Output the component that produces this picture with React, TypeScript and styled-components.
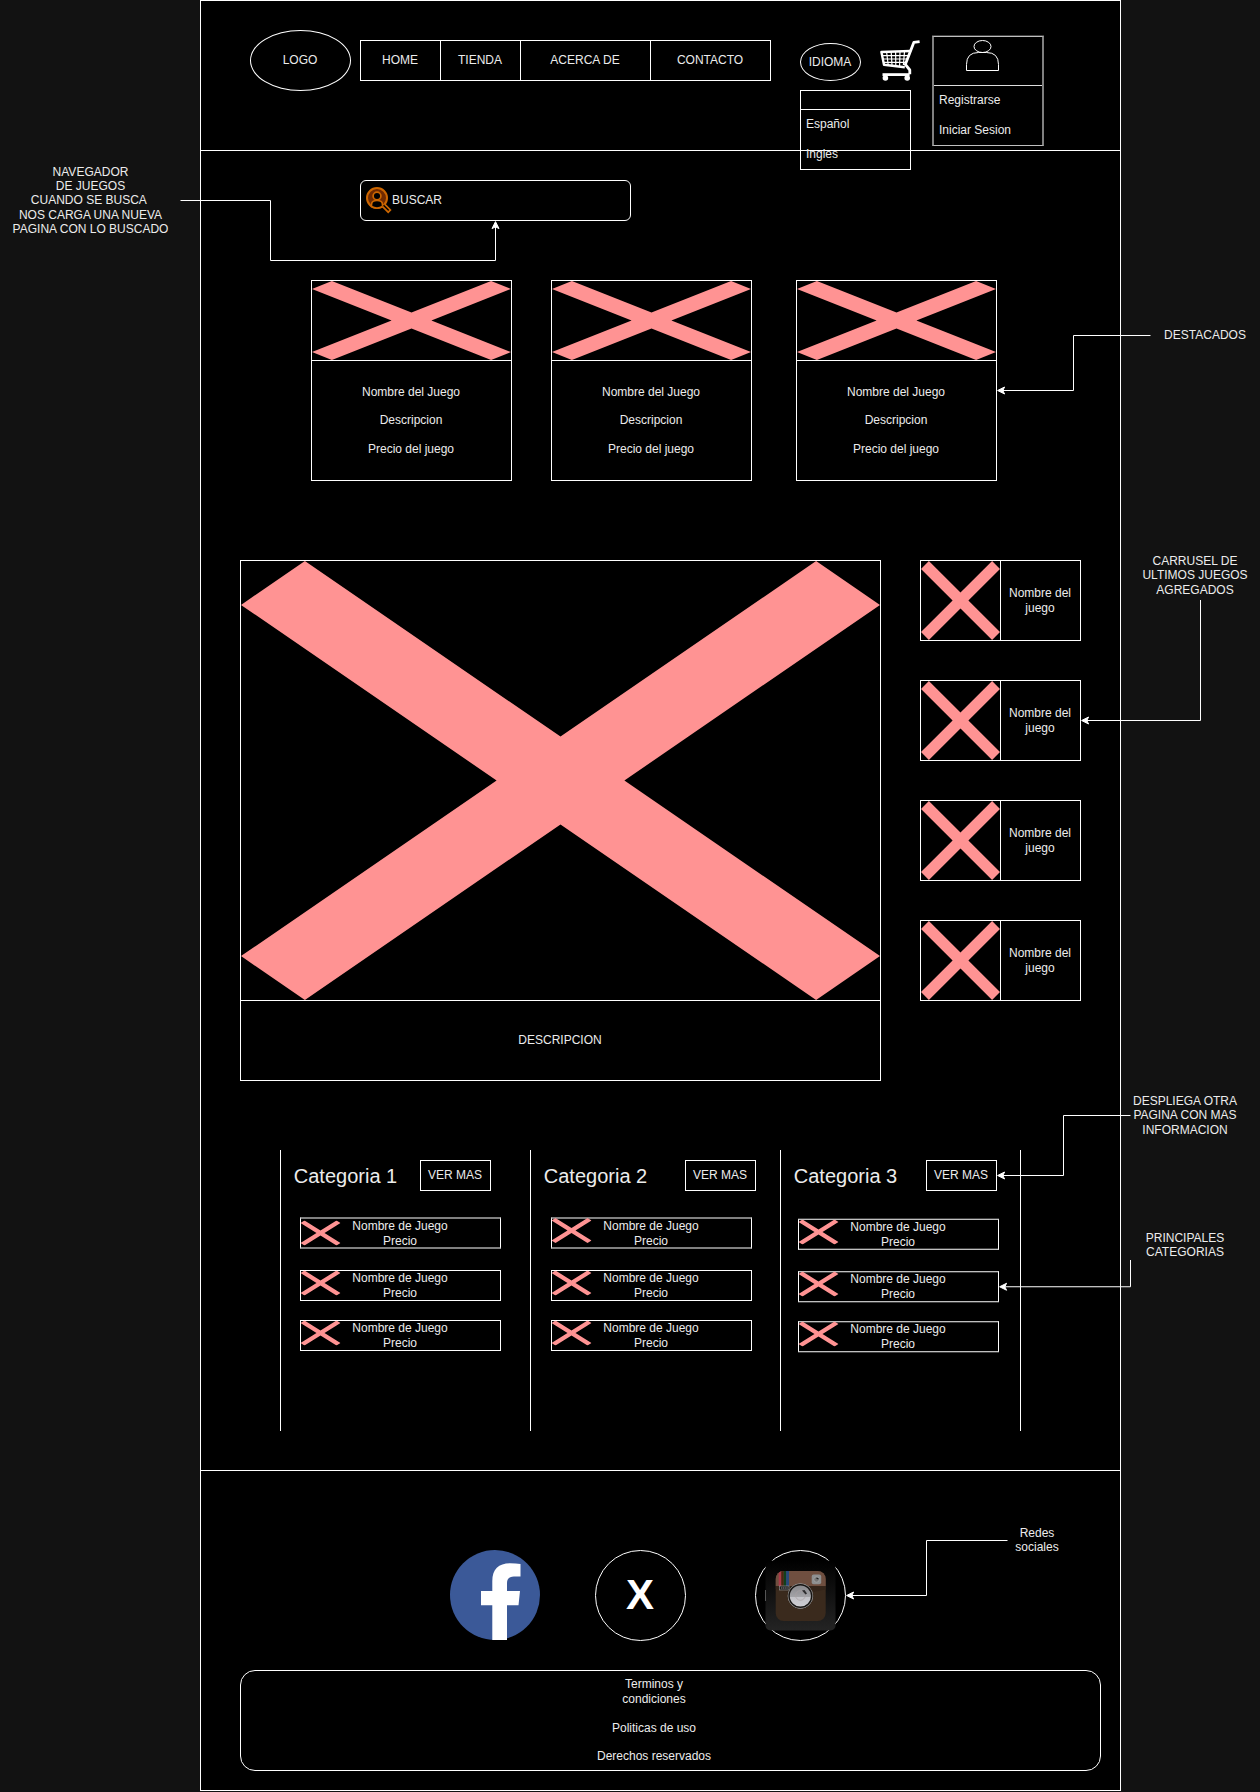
import React from "react";
import styled, { createGlobalStyle, css } from "styled-components";

const LINE = "#ffffff";
const PINK = "#ff9393";

const GlobalStyle = createGlobalStyle`
  *, *::before, *::after { box-sizing: border-box; }
  body {
    margin: 0;
    background: #121212;
    color: #ececec;
    font-family: "Liberation Sans", Arial, Helvetica, sans-serif;
    font-size: 12px;
    line-height: 14.4px;
  }
  svg { display: block; }
`;

const Board = styled.div`
  position: relative;
  display: grid;
  grid-template-columns: 200px 921px 139px;
  width: 1260px;
  height: 1792px;
  overflow: hidden;
`;

const Margin = styled.aside<{ $side: "left" | "right" }>`
  display: flex;
  flex-direction: column;
  align-items: flex-start;
  padding-left: ${(p) => (p.$side === "left" ? 0 : 4)}px;
`;

const Note = styled.p<{ $before: number; $indent?: number; $width: number }>`
  margin: ${(p) => p.$before}px 0 0 ${(p) => p.$indent ?? 0}px;
  width: ${(p) => p.$width}px;
  text-align: center;
  white-space: pre;
`;

const Wireframe = styled.main`
  display: flex;
  flex-direction: column;
  height: 1791px;
  background: #000000;
  border: 1px solid ${LINE};
`;

/* Header */

const Header = styled.header`
  display: flex;
  align-items: flex-start;
  height: 150px;
  flex: none;
  padding-left: 49px;
  border-bottom: 1px solid ${LINE};
`;

const Oval = styled.div<{ $w: number; $h: number; $top: number }>`
  display: flex;
  align-items: center;
  justify-content: center;
  width: ${(p) => p.$w}px;
  height: ${(p) => p.$h}px;
  margin-top: ${(p) => p.$top}px;
  padding-right: 1px;
  border: 1px solid ${LINE};
  border-radius: 50%;
`;

const Nav = styled.nav`
  display: grid;
  grid-template-columns: 80px 80px 130px 119px;
  width: 411px;
  height: 41px;
  margin: 39px 29px 0 9px;
  border: 1px solid ${LINE};
`;

const NavItem = styled.a`
  display: flex;
  align-items: center;
  justify-content: center;
  padding: 0 1px 1px 0;
  &:not(:last-child) { border-right: 1px solid ${LINE}; }
`;

const Language = styled.div`
  width: 61px;
`;

const Menu = styled.ul`
  width: 111px;
  height: 80px;
  margin: 9px 0 0;
  padding: 0;
  list-style: none;
  border: 1px solid ${LINE};
`;

const MenuHead = styled.li`
  height: 19px;
  border-bottom: 1px solid ${LINE};
`;

const MenuItem = styled.li`
  display: flex;
  align-items: center;
  height: 30px;
  padding: 0 0 2px 5px;
`;

const CartSlot = styled.div`
  margin: 39px 12px 0 19px;
`;

const Account = styled.div`
  width: 112px;
  height: 110px;
  margin-top: 35px;
  border: solid #808080;
  border-width: 1px 2px;
  border-top-color: #bfbfbf;
  border-bottom-color: #bfbfbf;
  box-shadow: 0 -1px 0 #404040;
`;

const AccountPicture = styled.div`
  height: 49px;
  padding: 3px 0 0 32px;
  border-bottom: 1px solid #dddddd;
`;

/* Search */

const SearchBox = styled.div`
  display: flex;
  align-items: center;
  width: 271px;
  height: 41px;
  margin: 29px 0 0 159px;
  padding: 0 0 1px 5px;
  border: 1px solid ${LINE};
  border-radius: 6px;
`;

/* Featured cards */

const Featured = styled.section`
  display: grid;
  grid-template-columns: 240px 245px 201px;
  margin: 59px 0 0 110px;
`;

const GameCard = styled.article`
  width: 201px;
  height: 201px;
  border: 1px solid ${LINE};
`;

const CardImage = styled.div`
  height: 80px;
  border-bottom: 1px solid ${LINE};
`;

const CardBody = styled.div`
  display: flex;
  flex-direction: column;
  align-items: center;
  justify-content: center;
  gap: 14.4px;
  height: 119px;
  padding-right: 1px;
`;

/* Carousel */

const Showcase = styled.section`
  display: flex;
  gap: 39px;
  margin: 79px 0 0 39px;
`;

const Hero = styled.article`
  width: 641px;
  height: 521px;
  border: 1px solid ${LINE};
`;

const HeroImage = styled.div`
  height: 440px;
  border-bottom: 1px solid ${LINE};
`;

const HeroCaption = styled.div`
  display: flex;
  align-items: center;
  justify-content: center;
  height: 79px;
  padding: 0 1px 1px 0;
`;

const Latest = styled.div`
  display: flex;
  flex-direction: column;
  gap: 39px;
`;

const LatestItem = styled.article`
  display: grid;
  grid-template-columns: 80px 79px;
  width: 161px;
  height: 81px;
  border: 1px solid ${LINE};
`;

const LatestImage = styled.div`
  border-right: 1px solid ${LINE};
`;

const LatestName = styled.div`
  display: flex;
  align-items: center;
  justify-content: center;
  text-align: center;
  padding-right: 1px;
  white-space: pre;
`;

/* Categories */

const Categories = styled.section`
  display: grid;
  grid-template-columns: 250px 250px 241px;
  width: 741px;
  height: 281px;
  margin: 69px 0 0 79px;
`;

const Category = styled.div`
  padding-top: 10px;
  border-left: 1px solid ${LINE};
  &:last-child { border-right: 1px solid ${LINE}; }
`;

const CategoryHead = styled.div<{ $gap: number }>`
  display: flex;
  height: 31px;
  gap: ${(p) => p.$gap}px;
`;

const CategoryTitle = styled.h2`
  width: 128px;
  margin: 0;
  padding-left: 1px;
  font-size: 20px;
  font-weight: 400;
  line-height: 33px;
  text-align: center;
`;

const MoreButton = styled.button`
  width: 71px;
  height: 31px;
  padding: 0 1px 1px 0;
  font: inherit;
  color: inherit;
  background: transparent;
  border: 1px solid ${LINE};
`;

const ProductList = styled.div<{ $left: number; $top: number }>`
  display: flex;
  flex-direction: column;
  margin: ${(p) => p.$top}px 0 0 ${(p) => p.$left}px;
`;

type Edge = "crisp" | "half" | "above" | "below";

const edges = {
  crisp: css``,
  half: css`
    height: 32px;
    border-top: 2px solid #808080;
    border-bottom: 2px solid #808080;
  `,
  above: css`
    border-top-color: #bfbfbf;
    border-bottom-color: #bfbfbf;
    box-shadow: 0 -1px 0 #404040, inset 0 -1px 0 #404040;
  `,
  below: css`
    border-top-color: #bfbfbf;
    border-bottom-color: #bfbfbf;
    box-shadow: inset 0 1px 0 #404040, 0 1px 0 #404040;
  `,
};

const Product = styled.div<{ $edge: Edge; $drop: number }>`
  display: grid;
  grid-template-columns: 40px 119px;
  width: 201px;
  height: 31px;
  border: 1px solid ${LINE};
  ${(p) => edges[p.$edge]}
  & + & { margin-top: 21px; }
  & + & + & { margin-top: 19px; }
  > svg { transform: translate(-0.5px, ${(p) => p.$drop}px); }
`;

const ProductText = styled.div`
  align-self: start;
  margin-top: -0.4px;
  padding-right: 1px;
  line-height: 15px;
  text-align: center;
  white-space: pre;
`;

/* Footer */

const Footer = styled.footer`
  flex: 1;
  margin-top: 39px;
  border-top: 1px solid ${LINE};
`;

const Social = styled.div`
  display: flex;
  height: 91px;
  margin: 79px 0 0 249px;
`;

const XBadge = styled.div`
  display: flex;
  align-items: center;
  justify-content: center;
  width: 91px;
  height: 91px;
  margin: 0 69px 0 55px;
  padding: 0 1px 1px 0;
  border: 1px solid ${LINE};
  border-radius: 50%;
  color: #ffffff;
  font-size: 42px;
  font-weight: 700;
  line-height: 1;
`;

const Legal = styled.div`
  display: flex;
  flex-direction: column;
  align-items: center;
  justify-content: center;
  gap: 14.4px;
  width: 861px;
  height: 101px;
  margin: 29px 0 0 39px;
  padding-right: 33px;
  border: 1px solid ${LINE};
  border-radius: 15px;
  text-align: center;
  white-space: pre;
`;

const Overlay = styled.svg`
  position: absolute;
  inset: 0;
  pointer-events: none;
`;

const Cross = ({ w = "100%", h = "100%" }: { w?: number | string; h?: number | string }) => (
  <svg width={w} height={h} viewBox="0 0 100 100" preserveAspectRatio="none">
    <polygon points="10,0 50,40 90,0 100,10 60,50 100,90 90,100 50,60 10,100 0,90 40,50 0,10" fill={PINK} />
  </svg>
);

const Cart = () => (
  <svg width="40" height="42" viewBox="0 0 40 42" fill="none" stroke="#fff">
    <path d="M39.6 1.7L33.8 2.4L25.3 24.4L29.8 30V34.2" strokeWidth="2.8" strokeLinejoin="round" />
    <path d="M30.5 11L1.4 12L4 24.8L24.8 27.2" strokeWidth="2.4" strokeLinejoin="round" />
    <path d="M6.6 12L8.2 25M11.2 12L12 25.4M15.6 11.8L15.8 25.8M20 11.6L19.6 26M24.5 11.4L23.4 25M2.2 15.6H28.6M2.8 19H27.4M3.6 22.4H26" strokeWidth="1.2" />
    <path d="M2.5 34.6H29.6" strokeWidth="2.8" />
    <circle cx="5.4" cy="38" r="2.8" fill="#fff" stroke="none" />
    <circle cx="27.2" cy="38" r="2.8" fill="#fff" stroke="none" />
  </svg>
);

const Person = () => (
  <svg width="34" height="32" viewBox="0 0 34 32" fill="none" stroke="#fff">
    <ellipse cx="16.5" cy="6.5" rx="8.5" ry="6" />
    <path d="M.5 30.5V24.5Q.5 12.5 12.5 12.5H20.5Q32.5 12.5 32.5 24.5V30.5Z" />
  </svg>
);

const SearchPerson = () => (
  <svg width="26" height="28" viewBox="0 0 26 28" fill="none" stroke="#cc6600" strokeWidth="2">
    <circle cx="11" cy="12" r="10" fill="#702a00" />
    <path d="M5.5 20.5V18.5Q5.5 14.5 11 14.5T16.5 18.5V20.5Q11 23.6 5.5 20.5Z" fill="#000" strokeWidth="1.7" />
    <circle cx="11" cy="10" r="3.9" fill="#000" strokeWidth="1.7" />
    <path d="M18.6 18.2L24.4 24L22.2 26.2L16.4 20.4" fill="#000" strokeWidth="1.7" />
  </svg>
);

const Facebook = () => (
  <svg width="90" height="90" viewBox="0 0 90 90">
    <circle cx="45" cy="45" r="45" fill="#3b5998" />
    <path d="M42.3 90V55.3H31V41H42.3V31C42.3 19.5 48.5 13.3 60 13.3Q66 13.3 70.5 14V26.4H64Q57 26.4 57 33V41H70L68.5 55.3H57V90Z" fill="#fff" />
  </svg>
);

const Instagram = () => (
  <svg width="91" height="91" viewBox="0 0 91 91">
    <defs>
      <linearGradient id="igBack" x1="0" y1="0" x2="0" y2="1">
        <stop offset="0" stopColor="#000" />
        <stop offset="1" stopColor="#242424" />
      </linearGradient>
      <linearGradient id="igLens" x1="0" y1="0" x2="0" y2="1">
        <stop offset="0" stopColor="#86868a" />
        <stop offset=".52" stopColor="#a2a2a6" />
        <stop offset=".54" stopColor="#c2c2c7" />
        <stop offset="1" stopColor="#cfcfd4" />
      </linearGradient>
      <clipPath id="igBody">
        <rect x="20.7" y="21" width="50" height="50" rx="8" />
      </clipPath>
    </defs>
    <circle cx="45.5" cy="45.5" r="45" fill="none" stroke="#fff" />
    <rect x="10.5" y="10.5" width="70" height="70" rx="5" fill="url(#igBack)" />
    <path d="M10.5 40V51" stroke="#777" strokeWidth=".7" />
    <g clipPath="url(#igBody)">
      <rect x="20" y="20" width="52" height="52" fill="#3a2a1d" />
      <rect x="20" y="20" width="52" height="16" fill="#6f4f40" />
      <path d="M20 36H72V39L45.5 45L20 39Z" fill="#34251a" />
      <rect x="23.7" y="20" width="2.6" height="16" fill="#a83a48" />
      <rect x="26.3" y="20" width="2.4" height="16" fill="#4a2410" />
      <rect x="28.7" y="20" width="2.4" height="16" fill="#123f1c" />
      <rect x="31.1" y="20" width="2.9" height="16" fill="#27497a" />
    </g>
    <rect x="24.5" y="36" width="9.5" height="4" fill="#1c1c1c" stroke="#999" strokeWidth=".6" />
    <path d="M26 38H33" stroke="#888" strokeWidth="1" strokeDasharray="1.3 .5" />
    <rect x="56.7" y="24.5" width="9.5" height="9.7" rx="2" fill="#8d8f90" />
    <circle cx="61.5" cy="29.5" r="2.7" fill="#777" stroke="#a5a5a5" strokeWidth=".8" />
    <path d="M61.5 28L63.5 29" stroke="#222" strokeWidth="1.3" />
    <circle cx="45.4" cy="46" r="12.3" fill="url(#igLens)" stroke="#8f8f8f" strokeWidth="1" />
    <circle cx="45.4" cy="46" r="11.3" fill="none" stroke="#161412" strokeWidth="1.4" />
    <circle cx="45.4" cy="45.5" r="4.8" fill="none" stroke="#a99fa1" strokeWidth=".7" />
    <path d="M47 40.5L49.5 40L52 43.5L50.5 44.5Z" fill="#2d2d2f" />
  </svg>
);

const Arrow = ({ d, tip, up }: { d: string; tip: [number, number]; up?: boolean }) => (
  <g stroke="#fff">
    <path d={d} fill="none" />
    <path
      d="M0 0L7 -3.5L5.25 0L7 3.5Z"
      fill="#fff"
      transform={`translate(${tip[0]} ${tip[1]})${up ? " rotate(90)" : ""}`}
    />
  </g>
);

const Connectors = () => (
  <Overlay width="1260" height="1792">
    <Arrow d="M180.5 200.5H270.5V260.5H495.5V226" tip={[495.5, 221.6]} up />
    <Arrow d="M1150.5 335.5H1073.5V390.5H1002" tip={[997.6, 390.5]} />
    <Arrow d="M1200.5 600V720.5H1086" tip={[1081.6, 720.5]} />
    <Arrow d="M1130.5 1115.5H1063.5V1175.5H1002" tip={[997.6, 1175.5]} />
    <Arrow d="M1130.5 1260V1286.75H1004" tip={[999.6, 1286.75]} />
    <Arrow d="M1007.5 1540.5H926.5V1595.5H851" tip={[846.6, 1595.5]} />
  </Overlay>
);

interface ColumnData {
  title: string;
  gap: number;
  left: number;
  top: number;
  rows: { edge: Edge; drop: number }[];
}

const columns: ColumnData[] = [
  {
    title: "Categoria 1",
    gap: 11,
    left: 19,
    top: 26,
    rows: [{ edge: "half", drop: 1.5 }, { edge: "crisp", drop: -0.5 }, { edge: "crisp", drop: -0.5 }],
  },
  {
    title: "Categoria 2",
    gap: 26,
    left: 20,
    top: 26,
    rows: [{ edge: "half", drop: -1 }, { edge: "crisp", drop: -0.5 }, { edge: "crisp", drop: -0.5 }],
  },
  {
    title: "Categoria 3",
    gap: 17,
    left: 17,
    top: 28,
    rows: [{ edge: "above", drop: -0.5 }, { edge: "below", drop: -0.5 }, { edge: "below", drop: -0.5 }],
  },
];

export default function App() {
  return (
    <>
      <GlobalStyle />
      <Board>
        <Margin $side="left">
          <Note $before={164.6} $width={181}>
            {"NAVEGADOR\nDE JUEGOS\nCUANDO SE BUSCA\u00a0\nNOS CARGA UNA NUEVA\nPAGINA CON LO BUSCADO"}
          </Note>
        </Margin>

        <Wireframe>
          <Header>
            <Oval $w={101} $h={61} $top={29}>LOGO</Oval>
            <Nav>
              <NavItem>HOME</NavItem>
              <NavItem>TIENDA</NavItem>
              <NavItem>ACERCA DE</NavItem>
              <NavItem>CONTACTO</NavItem>
            </Nav>
            <Language>
              <Oval $w={61} $h={38} $top={42}>IDIOMA</Oval>
              <Menu>
                <MenuHead />
                <MenuItem>Español</MenuItem>
                <MenuItem>Ingles</MenuItem>
              </Menu>
            </Language>
            <CartSlot><Cart /></CartSlot>
            <Account>
              <AccountPicture><Person /></AccountPicture>
              <MenuItem as="div">Registrarse</MenuItem>
              <MenuItem as="div">Iniciar Sesion</MenuItem>
            </Account>
          </Header>

          <SearchBox>
            <SearchPerson />
            BUSCAR
          </SearchBox>

          <Featured>
            {[0, 1, 2].map((i) => (
              <GameCard key={i}>
                <CardImage><Cross /></CardImage>
                <CardBody>
                  <span>Nombre del Juego</span>
                  <span>Descripcion</span>
                  <span>Precio del juego</span>
                </CardBody>
              </GameCard>
            ))}
          </Featured>

          <Showcase>
            <Hero>
              <HeroImage><Cross /></HeroImage>
              <HeroCaption>DESCRIPCION</HeroCaption>
            </Hero>
            <Latest>
              {[0, 1, 2, 3].map((i) => (
                <LatestItem key={i}>
                  <LatestImage><Cross /></LatestImage>
                  <LatestName>{"Nombre del\njuego"}</LatestName>
                </LatestItem>
              ))}
            </Latest>
          </Showcase>

          <Categories>
            {columns.map((c) => (
              <Category key={c.title}>
                <CategoryHead $gap={c.gap}>
                  <CategoryTitle>{c.title}</CategoryTitle>
                  <MoreButton>VER MAS</MoreButton>
                </CategoryHead>
                <ProductList $left={c.left} $top={c.top}>
                  {c.rows.map((r, i) => (
                    <Product key={i} $edge={r.edge} $drop={r.drop}>
                      <Cross w={40} h={25} />
                      <ProductText>{"Nombre de Juego\nPrecio"}</ProductText>
                    </Product>
                  ))}
                </ProductList>
              </Category>
            ))}
          </Categories>

          <Footer>
            <Social>
              <Facebook />
              <XBadge>X</XBadge>
              <Instagram />
            </Social>
            <Legal>
              <span>{"Terminos y\ncondiciones"}</span>
              <span>Politicas de uso</span>
              <span>Derechos reservados</span>
            </Legal>
          </Footer>
        </Wireframe>

        <Margin $side="right">
          <Note $before={328} $indent={10} $width={140}>DESTACADOS</Note>
          <Note $before={211.6} $width={140}>{"CARRUSEL DE\nULTIMOS JUEGOS\nAGREGADOS"}</Note>
          <Note $before={496.6} $indent={-10} $width={140}>{"DESPLIEGA OTRA\nPAGINA CON MAS\nINFORMACION"}</Note>
          <Note $before={94} $indent={-10} $width={140}>{"PRINCIPALES\nCATEGORIAS"}</Note>
          <Note $before={266} $indent={-158} $width={140}>{"Redes\nsociales"}</Note>
        </Margin>

        <Connectors />
      </Board>
    </>
  );
}
